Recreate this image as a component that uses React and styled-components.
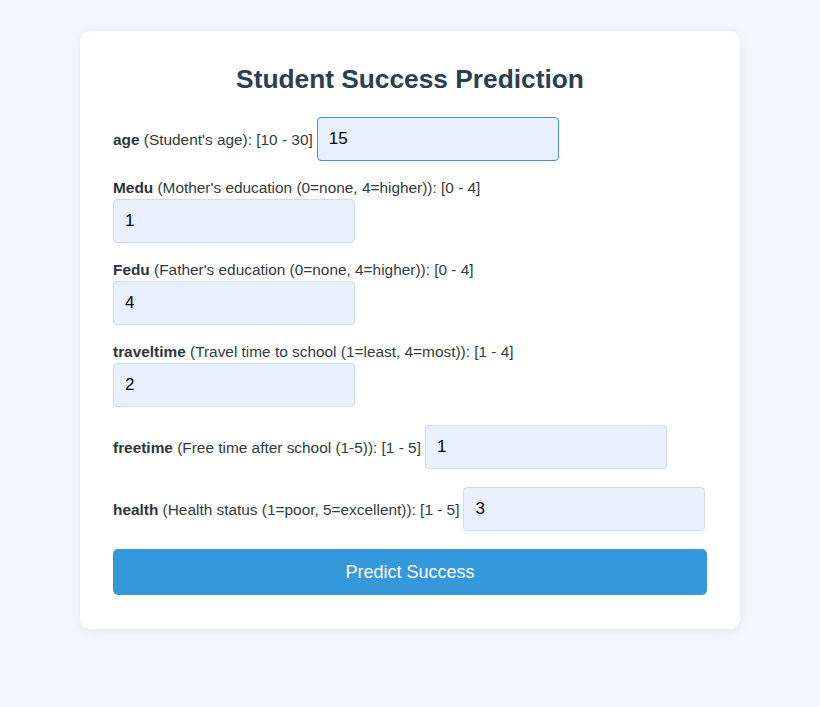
import React, { useState } from 'react'
import styled, { createGlobalStyle } from 'styled-components'

const GlobalStyle = createGlobalStyle`
  html, body {
    margin: 0;
    padding: 0;
    background: #f4f7fb;
    font-family: "Liberation Sans", Arial, sans-serif;
  }
`

const Page = styled.div`
  min-height: 707px;
  padding-top: 31px;
  box-sizing: border-box;
`

const Card = styled.form`
  width: 660px;
  margin: 0 auto;
  padding: 33px 33px 34px;
  box-sizing: border-box;
  background: #ffffff;
  border-radius: 10px;
  box-shadow: 0 2px 12px rgba(0, 0, 0, 0.08);
`

const Title = styled.h2`
  margin: 0 0 23px;
  font-size: 26.3px;
  line-height: 30px;
  font-weight: bold;
  text-align: center;
  color: #2c3e50;
`

const Field = styled.div`
  display: flex;
  flex-wrap: wrap;
  align-items: center;
  column-gap: 4px;
  row-gap: 3px;
  margin-bottom: 18px;
`

const Label = styled.label`
  flex-basis: ${p => (p.$own ? '100%' : 'auto')};
  font-size: 15.4px;
  line-height: 17px;
  color: #333a44;

  b {
    color: #2c3440;
  }
`

const Input = styled.input`
  width: 242px;
  height: 44px;
  box-sizing: border-box;
  padding: 0 11px;
  font-family: "Liberation Sans", Arial, sans-serif;
  font-size: 17px;
  color: #000;
  background: #e8f0fe;
  border: 1px solid ${p => (p.$active ? '#4a90d9' : '#d5dbe3')};
  border-radius: 4px;
  outline: none;
`

const Button = styled.button`
  display: block;
  width: 100%;
  height: 46px;
  border: none;
  border-radius: 5px;
  background: #3498db;
  color: #ffffff;
  font-family: "Liberation Sans", Arial, sans-serif;
  font-size: 18px;
  cursor: pointer;
`

const fields = [
  { key: 'age', desc: "(Student's age): [10 - 30]", value: '15' },
  { key: 'Medu', desc: "(Mother's education (0=none, 4=higher)): [0 - 4]", value: '1', own: true },
  { key: 'Fedu', desc: "(Father's education (0=none, 4=higher)): [0 - 4]", value: '4', own: true },
  { key: 'traveltime', desc: '(Travel time to school (1=least, 4=most)): [1 - 4]', value: '2', own: true },
  { key: 'freetime', desc: '(Free time after school (1-5)): [1 - 5]', value: '1' },
  { key: 'health', desc: '(Health status (1=poor, 5=excellent)): [1 - 5]', value: '3' },
]

export default function App() {
  const [values, setValues] = useState(
    Object.fromEntries(fields.map(f => [f.key, f.value]))
  )

  return (
    <>
      <GlobalStyle />
      <Page>
        <Card onSubmit={e => e.preventDefault()}>
          <Title>Student Success Prediction</Title>
          {fields.map(f => (
            <Field key={f.key}>
              <Label htmlFor={f.key} $own={f.own}>
                <b>{f.key}</b> {f.desc}
              </Label>
              <Input
                id={f.key}
                $active={f.key === 'age'}
                value={values[f.key]}
                onChange={e => setValues({ ...values, [f.key]: e.target.value })}
              />
            </Field>
          ))}
          <Button type="submit">Predict Success</Button>
        </Card>
      </Page>
    </>
  )
}
